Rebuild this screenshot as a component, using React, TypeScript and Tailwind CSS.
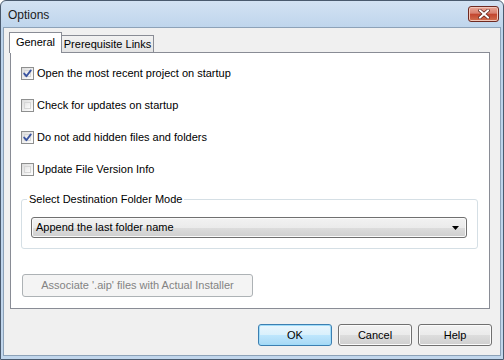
import { ReactNode } from "react";

const font = { fontFamily: '"Liberation Sans", Arial, sans-serif' };

const CheckBox = ({ checked }: { checked?: boolean }) => (
  <span className="relative w-[13px] h-[13px] shrink-0 border border-[#8e8f8f] bg-[linear-gradient(135deg,#dcdcdc,#ffffff)] p-[2px]">
    <span className="block w-full h-full border border-[#d6d6d6] bg-[linear-gradient(135deg,#e6e6e6,#fbfbfb)]" />
    {checked && (
      <svg
        viewBox="0 0 13 13"
        className="absolute left-[-1px] top-[-1px] w-[13px] h-[13px]"
      >
        <path
          d="M3.2 6.6 L5.4 9.2 L9.8 3.4"
          fill="none"
          stroke="#3b55a0"
          strokeWidth="1.9"
          strokeLinecap="round"
          strokeLinejoin="round"
        />
      </svg>
    )}
  </span>
);

const CheckRow = ({ label, checked }: { label: string; checked?: boolean }) => (
  <div className="h-[13px] flex items-center gap-[3px] text-[11px] text-[#000]">
    <CheckBox checked={checked} />
    <span className="leading-none">{label}</span>
  </div>
);

type DialogButtonProps = {
  children: ReactNode;
  focused?: boolean;
};

const DialogButton = ({ children, focused }: DialogButtonProps) => (
  <button
    type="button"
    className={
      focused
        ? "w-[74px] h-[22px] rounded-[3px] border border-[#3c7fb1] bg-[linear-gradient(#eaf6fd_0%,#d9f0fc_50%,#bee6fd_51%,#a7d9f5_100%)] shadow-[inset_0_0_0_1px_#9fdcfa] text-[11px] text-black"
        : "w-[74px] h-[22px] rounded-[3px] border border-[#707070] bg-[linear-gradient(#f2f2f2_0%,#ebebeb_50%,#dddddd_51%,#cfcfcf_100%)] shadow-[inset_0_0_0_1px_#fbfbfb] text-[11px] text-black"
    }
  >
    {children}
  </button>
);

export default function App() {
  return (
    <div
      style={font}
      className="w-[504px] h-[360px] flex flex-col rounded-t-[6px] border border-[#4a5a6e] bg-[linear-gradient(#d3e2f3,#bcd3eb_30px,#c1d6ec)] overflow-hidden"
    >
      {/* title bar */}
      <div className="h-[26px] flex items-start pl-[7px] pr-[4px]">
        <span className="mt-[5px] text-[12px] text-[#1b1b1b]">Options</span>
        <button
          type="button"
          className="ml-auto mt-[5px] w-[31px] h-[16px] rounded-[3px] border border-[#6e2a22] bg-[linear-gradient(#eaa797_0%,#d8806f_45%,#c2442e_50%,#d2704f_100%)] shadow-[inset_0_0_0_1px_#f2c7b9] flex items-center justify-center"
        >
          <svg viewBox="0 0 12 10" className="w-[12px] h-[10px]">
            <path
              d="M2 1.5 L10 8.5 M10 1.5 L2 8.5"
              stroke="#5a2018"
              strokeWidth="3.4"
              strokeLinecap="square"
            />
            <path
              d="M2 1.5 L10 8.5 M10 1.5 L2 8.5"
              stroke="#ffffff"
              strokeWidth="2"
              strokeLinecap="square"
            />
          </svg>
        </button>
      </div>

      {/* client area */}
      <div className="flex-1 mx-[2px] mb-[3px] border border-[#8da2b8] bg-[#f0f0f0] flex flex-col pl-[6px] pr-[10px] pt-[4px]">
        {/* tabs */}
        <div className="flex items-end h-[21px] text-[11px] text-black">
          <div className="relative z-10 -mx-[1px] h-[21px] w-[53px] border border-b-0 border-[#898c95] bg-white flex items-center justify-center pb-[1px]">
            General
          </div>
          <div className="h-[18px] w-[92px] ml-[1px] border border-b-0 border-l-0 border-[#898c95] bg-[linear-gradient(#f2f2f2,#e3e3e3)] flex items-center justify-center">
            Prerequisite Links
          </div>
        </div>

        {/* panel */}
        <div className="-mt-[1px] h-[257px] border border-[#898c95] bg-white pl-[10px] pt-[14px] flex flex-col">
          <div className="flex flex-col gap-[19px]">
            <CheckRow label="Open the most recent project on startup" checked />
            <CheckRow label="Check for updates on startup" />
            <CheckRow label="Do not add hidden files and folders" checked />
            <CheckRow label="Update File Version Info" />
          </div>

          {/* group box */}
          <div className="relative mt-[23px] w-[457px] h-[50px] rounded-[3px] border border-[#d5dfe5] pt-[17px] pl-[9px]">
            <span className="absolute left-[5px] -top-[8px] px-[2px] bg-white text-[11px] leading-[14px] text-black">
              Select Destination Folder Mode
            </span>
            <div className="w-[436px] h-[21px] rounded-[3px] border border-[#707070] bg-[linear-gradient(#f2f2f2_0%,#ebebeb_50%,#dddddd_51%,#cfcfcf_100%)] shadow-[inset_0_0_0_1px_#fafafa] flex items-center pl-[4px] pr-[7px] text-[11px] text-black">
              <span>Append the last folder name</span>
              <svg viewBox="0 0 7 4" className="ml-auto w-[7px] h-[4px]">
                <path d="M0 0 L7 0 L3.5 4 Z" fill="#000" />
              </svg>
            </div>
          </div>

          <button
            type="button"
            disabled
            className="mt-[25px] ml-[1px] w-[231px] h-[23px] rounded-[3px] border border-[#adb2b5] bg-[#f4f4f4] text-[11px] text-[#838383]"
          >
            Associate '.aip' files with Actual Installer
          </button>
        </div>

        {/* bottom buttons */}
        <div className="mt-[15px] -mr-[2px] flex justify-end gap-[6px]">
          <DialogButton focused>OK</DialogButton>
          <DialogButton>Cancel</DialogButton>
          <DialogButton>Help</DialogButton>
        </div>
      </div>
    </div>
  );
}
